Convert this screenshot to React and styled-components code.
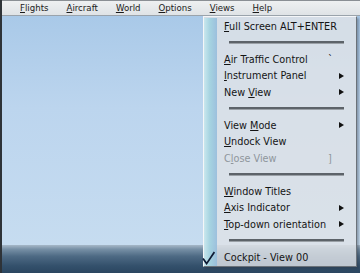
import React from "react";
import styled, { createGlobalStyle } from "styled-components";

const Global = createGlobalStyle`
  html, body { margin: 0; padding: 0; background: #c6dcf0; }
  body { font-family: "DejaVu Sans", "Liberation Sans", sans-serif; }
`;

const topMenus = ["Flights", "Aircraft", "World", "Options", "Views", "Help"];

// u = position of the underlined letter
const viewItems = [
  { type: "item", label: "Full Screen ALT+ENTER", u: 0 },
  { type: "sep" },
  { type: "item", label: "Air Traffic Control", u: 0, hint: "`" },
  { type: "item", label: "Instrument Panel", u: 0, sub: true },
  { type: "item", label: "New View", u: 4, sub: true },
  { type: "sep" },
  { type: "item", label: "View Mode", u: 5, sub: true },
  { type: "item", label: "Undock View", u: 0 },
  { type: "item", label: "Close View", u: 1, hint: "]", disabled: true },
  { type: "sep" },
  { type: "item", label: "Window Titles", u: 0 },
  { type: "item", label: "Axis Indicator", u: 0, sub: true },
  { type: "item", label: "Top-down orientation", u: 0, sub: true },
  { type: "sep" },
  { type: "item", label: "Cockpit - View 00", u: -1, checked: true },
];

function Mnemonic({ text, at }) {
  if (at < 0) return text;
  return (
    <>
      {text.slice(0, at)}
      <U>{text[at]}</U>
      {text.slice(at + 1)}
    </>
  );
}

export default function App() {
  return (
    <>
      <Global />
      <Screen>
        <MenuBar>
          {topMenus.map((m) => (
            <TopItem key={m}>
              <Mnemonic text={m} at={0} />
            </TopItem>
          ))}
        </MenuBar>
        <Viewport>
          <Sky />
          <Ground />
          <Dropdown>
            {viewItems.map((it, i) =>
              it.type === "sep" ? (
                <SepRow key={i}>
                  <Gutter />
                  <SepLine />
                </SepRow>
              ) : (
                <Row key={i} $disabled={it.disabled}>
                  <Gutter>
                    {it.checked && (
                      <Check viewBox="0 0 13 14">
                        <path d="M1 7.5 L4.6 12.6 L12.4 1" fill="none" stroke="#0e1a33" strokeWidth="1.7" />
                      </Check>
                    )}
                  </Gutter>
                  <Label>
                    <Mnemonic text={it.label} at={it.u} />
                  </Label>
                  <Hint>{it.hint}</Hint>
                  <Arrow $show={it.sub} />
                </Row>
              )
            )}
          </Dropdown>
        </Viewport>
      </Screen>
    </>
  );
}

const Screen = styled.div`
  width: 360px;
  height: 273px;
  display: flex;
  flex-direction: column;
  overflow: hidden;
  border-left: 2px solid #2e3338;
  box-sizing: border-box;
`;

const MenuBar = styled.div`
  height: 16px;
  flex: 0 0 16px;
  display: flex;
  align-items: center;
  padding-left: 9px;
  box-sizing: border-box;
  background: linear-gradient(#eef0f1, #dfe3e6);
  border-top: 1px solid #8a8f94;
  border-bottom: 1px solid #9aa3ab;
`;

const TopItem = styled.div`
  padding: 0 9px;
  font-size: 8.6px;
  color: #1a1a1a;
  line-height: 14px;
`;

const U = styled.span`
  text-decoration: underline;
  text-underline-offset: 1px;
`;

const Viewport = styled.div`
  position: relative;
  flex: 1;
  display: flex;
  flex-direction: column;
`;

const Sky = styled.div`
  flex: 1;
  background: linear-gradient(#a9c9e8, #bcd5ee 40%, #c6dcf0);
`;

const Ground = styled.div`
  flex: 0 0 28px;
  background: linear-gradient(#a6b8c8, #7790a6 15%, #4e6a84 40%, #33506b 75%, #2b4660);
`;

const Dropdown = styled.div`
  position: absolute;
  left: 201px;
  top: 0;
  width: 152px;
  padding: 1px 0 0;
  display: flex;
  flex-direction: column;
  background: rgba(222, 226, 230, 0.82);
  border: 1px solid #f4f6f8;
  border-right: 1px solid #6b7279;
  border-bottom: 1px solid #6b7279;
  box-shadow: 2px 2px 2px rgba(40, 50, 60, 0.35);
`;

const Row = styled.div`
  height: 16.5px;
  display: flex;
  align-items: center;
  font-size: 9.7px;
  color: ${(p) => (p.$disabled ? "#8f969c" : "#141414")};
`;

const SepRow = styled.div`
  height: 16.5px;
  display: flex;
  align-items: center;
`;

const Gutter = styled.div`
  align-self: stretch;
  width: 13px;
  flex: 0 0 13px;
  margin-right: 7px;
  position: relative;
  background: linear-gradient(90deg, rgba(200, 232, 238, 0.9), rgba(160, 210, 224, 0.9) 45%, rgba(150, 188, 220, 0.9));
`;

const Check = styled.svg`
  position: absolute;
  left: -2px;
  top: 2px;
  width: 13px;
  height: 14px;
`;

const Label = styled.span`
  flex: 1;
  white-space: nowrap;
`;

const Hint = styled.span`
  width: 10px;
`;

const Arrow = styled.span`
  width: 0;
  height: 0;
  margin: 0 12px 0 1px;
  border-top: 3.5px solid transparent;
  border-bottom: 3.5px solid transparent;
  border-left: 5px solid ${(p) => (p.$show ? "#111" : "transparent")};
`;

const SepLine = styled.div`
  flex: 1;
  margin: 0 12px 0 5px;
  height: 2px;
  background: #5d6369;
  border-bottom: 1px solid #9aa0a6;
`;
